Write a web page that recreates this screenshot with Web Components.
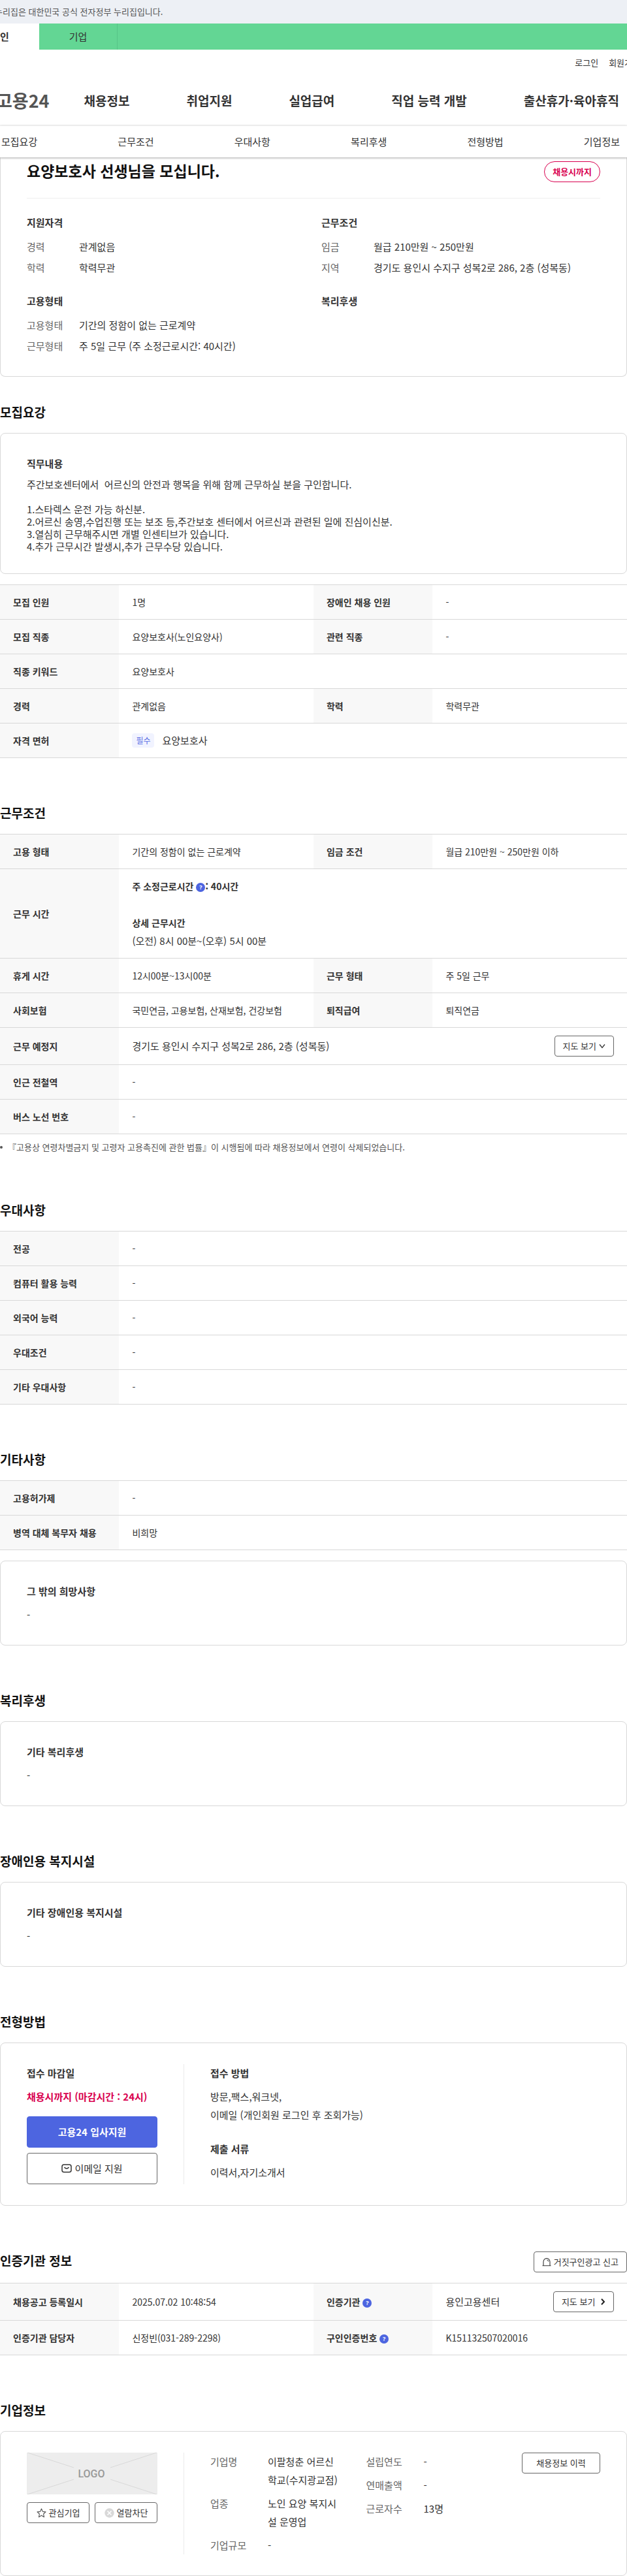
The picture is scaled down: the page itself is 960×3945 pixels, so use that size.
<!DOCTYPE html>
<html lang="ko">
<head>
<meta charset="UTF-8">
<meta name="viewport" content="width=device-width, initial-scale=1">
<title>고용24 채용정보</title>
<style>
  body {
    margin: 0;
    overflow-x: hidden;
    background: #fff;
    color: #333;
    font-family: "Noto Sans CJK KR", "Noto Sans", sans-serif;
    font-size: 15px;
    line-height: 28px;
  }
  main { display: block; }
  .first { --section-top: 42px; }
</style>
</head>
<body>
<site-header></site-header>
<section-nav></section-nav>
<main>
  <job-summary></job-summary>

  <job-section heading="모집요강" class="first">
    <info-card heading="직무내용" compact>주간보호센터에서  어르신의 안전과 행복을 위해 함께 근무하실 분을 구인합니다.

1.스타렉스 운전 가능 하신분.
2.어르신 송영,수업진행 또는 보조 등,주간보호 센터에서 어르신과 관련된 일에 진심이신분.
3.열심히 근무해주시면 개별 인센티브가 있습니다.
4.추가 근무시간 발생시,추가 근무수당 있습니다.</info-card>
    <info-table name="recruit"></info-table>
  </job-section>

  <job-section heading="근무조건">
    <info-table name="work"></info-table>
    <foot-note>『고용상 연령차별금지 및 고령자 고용촉진에 관한 법률』이 시행됨에 따라 채용정보에서 연령이 삭제되었습니다.</foot-note>
  </job-section>

  <job-section heading="우대사항">
    <info-table name="prefer"></info-table>
  </job-section>

  <job-section heading="기타사항">
    <info-table name="etc"></info-table>
    <info-card heading="그 밖의 희망사항">-</info-card>
  </job-section>

  <job-section heading="복리후생">
    <info-card heading="기타 복리후생">-</info-card>
  </job-section>

  <job-section heading="장애인용 복지시설">
    <info-card heading="기타 장애인용 복지시설">-</info-card>
  </job-section>

  <job-section heading="전형방법">
    <apply-card></apply-card>
  </job-section>

  <job-section heading="인증기관 정보">
    <ui-button slot="action" icon="siren">거짓구인광고 신고</ui-button>
    <info-table name="agency"></info-table>
  </job-section>

  <job-section heading="기업정보">
    <company-card></company-card>
  </job-section>
</main>

<script>
const ICONS = {
  down: `<svg width="10" height="10" viewBox="0 0 10 10" fill="none" stroke="#333" stroke-width="1.3"><path d="M1 2.5 5 7.5 9 2.5"/></svg>`,
  right: `<svg width="8" height="10" viewBox="0 0 8 10" fill="none" stroke="#222" stroke-width="2"><path d="M2 .8 6 5 2 9.2"/></svg>`,
  siren: `<svg width="14" height="14" viewBox="0 0 14 14" fill="none" stroke="#333" stroke-width="1.1"><path d="M.5 12.7h13M2 12.5V7a5 5.4 0 0 1 10 0v5.500M7.500 4q2 .3 2.200 2.400"/></svg>`,
  star: `<svg width="15" height="15" viewBox="0 0 15 15" fill="none" stroke="#555" stroke-width="1.1" stroke-linejoin="round"><path d="M7.500 1 9.400 5.400 14 5.900 10.600 9 11.500 13.700 7.500 11.300 3.500 13.700 4.400 9 1 5.900 5.600 5.400Z"/></svg>`,
  block: `<svg width="15" height="15" viewBox="0 0 15 15"><circle cx="7.500" cy="7.500" r="7.200" fill="#d8d8d8"/><path d="M4.500 4.500l6 6M10.500 4.500l-6 6" stroke="#fff" stroke-width="1.500"/></svg>`,
  mail: `<svg width="16" height="14" viewBox="0 0 16 14" fill="none" stroke="#333" stroke-width="1.500"><rect x="1" y="1" width="14" height="11.500" rx="3"/><path d="M4.500 5q3.500 4 7 0"/></svg>`
};

class SiteHeader extends HTMLElement {
  connectedCallback() {
    this.attachShadow({ mode: "open" }).innerHTML = `
    <style>
    :host { display: block; overflow: hidden; }
    a { color: inherit; text-decoration: none; white-space: nowrap; }
    .gov {
      background: #edf0f5;
      color: #555;
      font-size: 13px;
      line-height: 36px;
    }
    .gov span { display: block; margin-left: -8px; white-space: nowrap; }
    /* the header rows are wider than the content on both sides */
    .wide { margin: 0 -60px; }
    .tabs { display: flex; background: #63d694; line-height: 40px; }
    .tabs a {
      box-sizing: border-box;
      width: 120px;
      text-align: center;
      border-right: 1px solid #57c487;
    }
    .tabs a.on { background: #fff; border: none; font-weight: bold; }
    .util {
      display: flex;
      justify-content: flex-end;
      gap: 16px;
      padding: 6px 40px 6px 0;
      font-size: 13px;
    }
    nav {
      display: flex;
      align-items: center;
      height: 76px;
      font-size: 19px;
      font-weight: bold;
    }
    nav .logo { margin: 0 53px 0 54px; font-size: 27px; color: #555; }
    nav .menu { display: flex; gap: 87px; }
    </style>
    <div class="gov"><span>누리집은 대한민국 공식 전자정부 누리집입니다.</span></div>
    <div class="tabs wide"><a class="on" href="#">개인</a><a href="#">기업</a></div>
    <div class="util wide"><a href="#">로그인</a><a href="#">회원가입</a></div>
    <nav class="wide">
      <a class="logo" href="#">고용24</a>
      <div class="menu">
        <a href="#">채용정보</a><a href="#">취업지원</a><a href="#">실업급여</a><a href="#">직업 능력 개발</a><a href="#">출산휴가·육아휴직</a>
      </div>
    </nav>`;
  }
}

class SectionNav extends HTMLElement {
  connectedCallback() {
    const items = ["모집요강", "근무조건", "우대사항", "복리후생", "전형방법", "기업정보"];
    this.attachShadow({ mode: "open" }).innerHTML = `
    <style>
    :host { display: block; position: relative; background: #fff; border-top: 1px solid #eaeaea; box-shadow: 0 1px 3px rgba(0, 0, 0, .35); }
    nav {
      display: flex;
      justify-content: space-between;
      padding: 0 11px 0 2px;
      line-height: 48px;
    }
    a { color: inherit; text-decoration: none; }
    </style>
    <nav>${items.map(t => `<a href="#${t}">${t}</a>`).join("")}</nav>`;
  }
}

class JobSummary extends HTMLElement {
  connectedCallback() {
    const groups = [
      ["지원자격", [["경력", "관계없음"], ["학력", "학력무관"]]],
      ["근무조건", [["임금", "월급 210만원 ~ 250만원"], ["지역", "경기도 용인시 수지구 성복2로 286, 2층 (성복동)"]]],
      ["고용형태", [["고용형태", "기간의 정함이 없는 근로계약"], ["근무형태", "주 5일 근무 (주 소정근로시간: 40시간)"]]],
      ["복리후생", []]
    ];
    this.attachShadow({ mode: "open" }).innerHTML = `
    <style>
    :host {
      display: block;
      padding: 6px 40px 34px;
      border: 1px solid #d8d8d8;
      border-top: none;
      border-radius: 0 0 8px 8px;
    }
    header {
      display: flex;
      justify-content: space-between;
      align-items: flex-start;
      padding-bottom: 24px;
      border-bottom: 1px solid #eee;
    }
    h1 { margin: 0; font-size: 23px; line-height: 28px; color: #111; }
    .due {
      padding: 0 12px;
      border: 1px solid #d9004f;
      border-radius: 16px;
      color: #d9004f;
      font-size: 13px;
      font-weight: bold;
      line-height: 30px;
    }
    .groups {
      display: grid;
      grid-template-columns: 1fr 1fr;
      gap: 26px 24px;
      padding-top: 24px;
    }
    h2 { margin: 0 0 12px; font-size: 15px; line-height: 26px; }
    dl {
      display: grid;
      grid-template-columns: 80px 1fr;
      gap: 8px 0;
      margin: 0;
      line-height: 24px;
    }
    dt { color: #666; }
    dd { margin: 0; }
    </style>
    <header><h1>요양보호사 선생님을 모십니다.</h1><span class="due">채용시까지</span></header>
    <div class="groups">
      ${groups.map(([title, rows]) => `
      <section>
        <h2>${title}</h2>
        <dl>${rows.map(([k, v]) => `<dt>${k}</dt><dd>${v}</dd>`).join("")}</dl>
      </section>`).join("")}
    </div>`;
  }
}

class JobSection extends HTMLElement {
  connectedCallback() {
    const heading = this.getAttribute("heading");
    this.attachShadow({ mode: "open" }).innerHTML = `
    <style>
    :host { display: block; padding-top: var(--section-top, 72px); }
    header {
      display: flex;
      justify-content: space-between;
      align-items: flex-start;
      padding-bottom: 16px;
    }
    h2 { margin: 0 0 4px; font-size: 19px; line-height: 24px; color: #111; }
    .body { display: grid; gap: 16px; }
    ::slotted(foot-note) { margin-top: -8px; }
    ::slotted([slot=action]) { margin-top: -2px; }
    </style>
    <header id="${heading}"><h2>${heading}</h2><slot name="action"></slot></header>
    <div class="body"><slot></slot></div>`;
  }
}

class InfoCard extends HTMLElement {
  connectedCallback() {
    this.attachShadow({ mode: "open" }).innerHTML = `
    <style>
    :host { display: block; padding: 32px 40px; border: 1px solid #d8d8d8; border-radius: 8px; }
    h3 { margin: 0 0 8px; font-size: 15px; line-height: 28px; }
    .text { white-space: pre-wrap; }
    :host([compact]) .text { line-height: 19px; }
    </style>
    <h3>${this.getAttribute("heading")}</h3>
    <div class="text"><slot></slot></div>`;
  }
}

class FootNote extends HTMLElement {
  connectedCallback() {
    this.attachShadow({ mode: "open" }).innerHTML = `
    <style>
    :host { display: flex; align-items: center; gap: 8px; color: #555; font-size: 13px; line-height: 24px; }
    i { width: 4px; height: 4px; border-radius: 50%; background: #555; }
    </style>
    <i></i><span><slot></slot></span>`;
  }
}

class UiButton extends HTMLElement {
  connectedCallback() {
    const icon = ICONS[this.getAttribute("icon")] || "";
    const after = this.hasAttribute("after");
    this.attachShadow({ mode: "open" }).innerHTML = `
    <style>
    :host { display: block; }
    button {
      display: flex;
      align-items: center;
      justify-content: center;
      gap: 4px;
      box-sizing: border-box;
      width: 100%;
      height: 32px;
      padding: 0 12px;
      border: 1px solid #666;
      border-radius: 4px;
      background: #fff;
      color: #333;
      font: inherit;
      font-size: 13px;
      white-space: nowrap;
      cursor: pointer;
    }
    svg { flex: none; }
    :host([size=large]) button { height: 48px; font-size: 15px; }
    :host([primary]) button { border-color: #4d65e0; background: #4d65e0; color: #fff; font-weight: bold; }
    :host([size=small]) button { padding: 0 4px; }
    </style>
    <button type="button">${after ? "" : icon}<slot></slot>${after ? icon : ""}</button>`;
  }
}

class HelpTip extends HTMLElement {
  connectedCallback() {
    this.attachShadow({ mode: "open" }).innerHTML = `
    <style>
    :host { display: inline-block; vertical-align: middle; line-height: 14px; }
    button {
      display: block;
      width: 14px;
      height: 14px;
      padding: 0;
      border: none;
      border-radius: 50%;
      background: #4d65e0;
      color: #fff;
      font: bold 9px/14px "Noto Sans", sans-serif;
    }
    </style>
    <button type="button">?</button>`;
  }
}

// each row is a list of label, value pairs
const TABLES = {
  recruit: [
    ["모집 인원", "1명", "장애인 채용 인원", "-"],
    ["모집 직종", "요양보호사(노인요양사)", "관련 직종", "-"],
    ["직종 키워드", "요양보호사"],
    ["경력", "관계없음", "학력", "학력무관"],
    ["자격 면허", `<div class="lic"><span class="badge">필수</span>요양보호사</div>`]
  ],
  work: [
    ["고용 형태", "기간의 정함이 없는 근로계약", "임금 조건", "월급 210만원 ~ 250만원 이하"],
    ["근무 시간", `<b>주 소정근로시간 <help-tip></help-tip>: 40시간</b><br><br><b>상세 근무시간</b><br><span class="big">(오전) 8시 00분~(오후) 5시 00분</span>`],
    ["휴게 시간", "12시00분~13시00분", "근무 형태", "주 5일 근무"],
    ["사회보험", "국민연금, 고용보험, 산재보험, 건강보험", "퇴직급여", "퇴직연금"],
    ["근무 예정지", `<div class="split">경기도 용인시 수지구 성복2로 286, 2층 (성복동)<ui-button icon="down" after>지도 보기</ui-button></div>`],
    ["인근 전철역", "-"],
    ["버스 노선 번호", "-"]
  ],
  prefer: [
    ["전공", "-"],
    ["컴퓨터 활용 능력", "-"],
    ["외국어 능력", "-"],
    ["우대조건", "-"],
    ["기타 우대사항", "-"]
  ],
  etc: [
    ["고용허가제", "-"],
    ["병역 대체 복무자 채용", "비희망"]
  ],
  agency: [
    ["채용공고 등록일시", "2025.07.02 10:48:54", "인증기관 <help-tip></help-tip>", `<div class="split">용인고용센터<ui-button icon="right" after>지도 보기&nbsp;</ui-button></div>`],
    ["인증기관 담당자", "신정빈(031-289-2298)", "구인인증번호 <help-tip></help-tip>", "K151132507020016"]
  ]
};

class InfoTable extends HTMLElement {
  connectedCallback() {
    const rows = TABLES[this.getAttribute("name")];
    this.attachShadow({ mode: "open" }).innerHTML = `
    <style>
    :host { display: block; }
    table {
      width: 100%;
      table-layout: fixed;
      border-spacing: 0;
      border-top: 1px solid #d8d8d8;
      font-size: 14px;
    }
    col.label { width: 19%; }
    col.value { width: 31%; }
    th, td { padding: 12px 20px; border-bottom: 1px solid #d8d8d8; text-align: left; }
    th { background: #f8f8f8; }
    .split { display: flex; justify-content: space-between; align-items: center; font-size: 15px; }
    .lic { display: flex; align-items: center; gap: 12px; font-size: 15px; }
    .big { font-size: 15px; }
    .badge {
      padding: 0 6px;
      border-radius: 4px;
      background: #f1f3ff;
      color: #5a6fe3;
      font-size: 12px;
      line-height: 22px;
    }
    </style>
    <table>
      <colgroup><col class="label"><col class="value"><col class="label"><col class="value"></colgroup>
      ${rows.map(([k, v, k2, v2]) => `<tr><th scope="row">${k}</th>` +
        (k2 ? `<td>${v}</td><th scope="row">${k2}</th><td>${v2}</td>` : `<td colspan="3">${v}</td>`) + "</tr>").join("")}
    </table>`;
  }
}

class ApplyCard extends HTMLElement {
  connectedCallback() {
    this.attachShadow({ mode: "open" }).innerHTML = `
    <style>
    :host { display: flex; gap: 40px; padding: 32px 40px; border: 1px solid #d8d8d8; border-radius: 8px; }
    .due { width: 200px; }
    .how { flex: 1; padding-left: 40px; border-left: 1px solid #eaeaea; }
    h3 { margin: 0 0 8px; font-size: 15px; line-height: 28px; }
    p { margin: 0 0 24px; }
    .due p { margin-bottom: 16px; color: #d9004f; font-weight: bold; }
    .how p:last-child { margin: 0; }
    ui-button + ui-button { margin-top: 8px; }
    </style>
    <div class="due">
      <h3>접수 마감일</h3>
      <p>채용시까지 (마감시간 : 24시)</p>
      <ui-button size="large" primary>고용24 입사지원</ui-button>
      <ui-button size="large" icon="mail">이메일 지원</ui-button>
    </div>
    <div class="how">
      <h3>접수 방법</h3>
      <p>방문,팩스,워크넷,<br>이메일 (개인회원 로그인 후 조회가능)</p>
      <h3>제출 서류</h3>
      <p>이력서,자기소개서</p>
    </div>`;
  }
}

class CompanyCard extends HTMLElement {
  connectedCallback() {
    this.attachShadow({ mode: "open" }).innerHTML = `
    <style>
    :host { display: flex; gap: 40px; padding: 32px 40px; border: 1px solid #d8d8d8; border-radius: 8px; }
    .brand { width: 200px; }
    .brand > svg { display: block; width: 100%; height: 64px; margin-bottom: 12px; background: #ededed; }
    .btns { display: grid; grid-template-columns: 1fr 1fr; gap: 8px; }
    .info {
      flex: 1;
      display: grid;
      grid-template-columns: 1fr 1fr 120px;
      align-items: start;
      gap: 40px;
      padding-left: 40px;
      border-left: 1px solid #eaeaea;
    }
    dl { display: grid; grid-template-columns: 88px 1fr; gap: 8px 0; margin: 0; }
    dt { color: #666; }
    dd { margin: 0; word-break: break-all; }
    </style>
    <div class="brand">
      <svg viewBox="0 0 200 64">
        <path d="M1 0 72 23M199 0 128 23M1 64 72 41M199 64 128 41" stroke="#d8d8d8" fill="none"/>
        <text x="99" y="38" text-anchor="middle" font-family="Roboto, sans-serif" font-size="16" font-weight="500" fill="#999">LOGO</text>
      </svg>
      <div class="btns">
        <ui-button size="small" icon="star">관심기업</ui-button>
        <ui-button size="small" icon="block">열람차단</ui-button>
      </div>
    </div>
    <div class="info">
      <dl>
        <dt>기업명</dt><dd>이팔청춘 어르신학교(수지광교점)</dd>
        <dt>업종</dt><dd>노인 요양 복지시설 운영업</dd>
        <dt>기업규모</dt><dd>-</dd>
      </dl>
      <dl>
        <dt>설립연도</dt><dd>-</dd>
        <dt>연매출액</dt><dd>-</dd>
        <dt>근로자수</dt><dd>13명</dd>
      </dl>
      <ui-button>채용정보 이력</ui-button>
    </div>`;
  }
}

customElements.define("site-header", SiteHeader);
customElements.define("section-nav", SectionNav);
customElements.define("job-summary", JobSummary);
customElements.define("job-section", JobSection);
customElements.define("info-card", InfoCard);
customElements.define("foot-note", FootNote);
customElements.define("ui-button", UiButton);
customElements.define("help-tip", HelpTip);
customElements.define("info-table", InfoTable);
customElements.define("apply-card", ApplyCard);
customElements.define("company-card", CompanyCard);
</script>
</body>
</html>
